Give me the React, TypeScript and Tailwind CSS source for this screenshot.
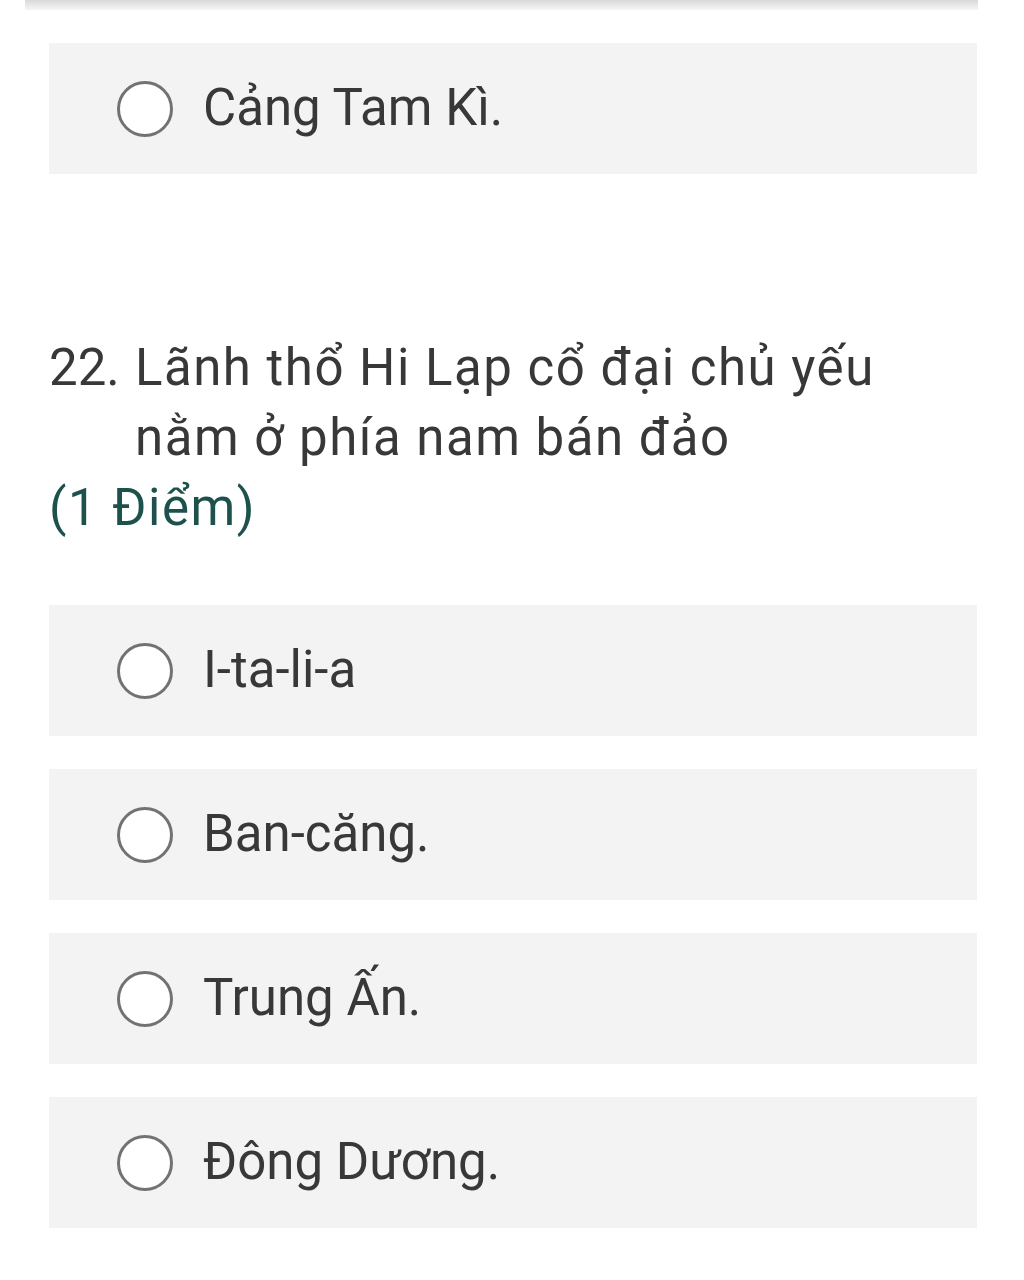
const options = ['I-ta-li-a', 'Ban-căng.', 'Trung Ấn.', 'Đông Dương.'];

function Option({ label }: { label: string }) {
  return (
    <div className="flex h-[131px] items-center bg-[#f3f3f3] pl-[68px]">
      <span className="h-[56px] w-[56px] shrink-0 rounded-full border-[3px] border-[#727272] bg-white" />
      <span className="ml-[30px] text-[51px] text-[#383838]">{label}</span>
    </div>
  );
}

export default function App() {
  return (
    <div className="min-h-[1280px] bg-white" style={{ fontFamily: 'Roboto, "Noto Sans", sans-serif' }}>
      {/* end of previous card */}
      <div className="mx-[25px] mr-[46px] h-[10px] bg-gradient-to-b from-[#d9d9d9] to-[#f6f6f6]" />

      <div className="px-[49px] pr-[47px]">
        <div className="mt-[33px]">
          <Option label="Cảng Tam Kì." />
        </div>

        <div className="mt-[159px] text-[51px] leading-[70px] tracking-[1.5px]">
          <div className="flex text-[#383838]">
            <span className="w-[86px] shrink-0 tracking-normal">22.</span>
            <span>Lãnh thổ Hi Lạp cổ đại chủ yếu<br />nằm ở phía nam bán đảo</span>
          </div>
          <div className="text-[#1d524c]">(1 Điểm)</div>
        </div>

        <div className="mt-[62px] flex flex-col gap-[33px]">
          {options.map((o) => (
            <Option key={o} label={o} />
          ))}
        </div>
      </div>
    </div>
  );
}
